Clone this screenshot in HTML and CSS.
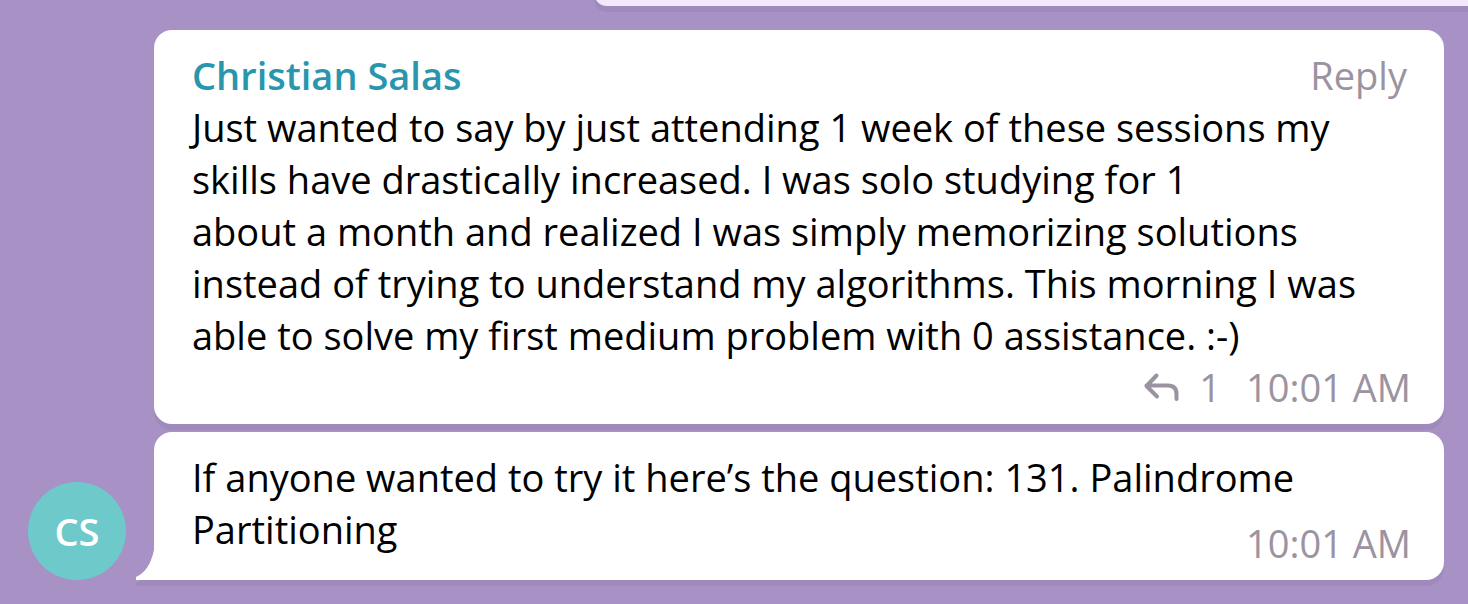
FILE: index.html
```html
<!DOCTYPE html>
<html lang="en">
<head>
<meta charset="utf-8">
<meta name="viewport" content="width=device-width, initial-scale=1">
<title>Group chat</title>
<link rel="stylesheet" href="styles.css">
</head>
<body>
<main class="chat">
  <div class="bubble outgoing"></div>
  <section class="group">
    <div class="avatar">CS</div>
    <div class="messages">
      <article class="bubble">
        <header class="head">
          <h2 class="author">Christian Salas</h2>
          <button class="reply" type="button">Reply</button>
        </header>
        <p class="text">Just wanted to say by just attending 1 week of these sessions my skills have drastically increased. I was solo studying for 1<br>about a month and realized I was simply memorizing solutions instead of trying to understand my algorithms. This morning I was able to solve my first medium problem with 0 assistance. :-)</p>
        <footer class="meta">
          <svg class="icon" viewBox="0 0 36 30" aria-hidden="true"><path d="M13.5 3.5 3.5 14l10.500 10.500M3.500 13.500H25q8.500 0 8.500 8.500v5"/></svg>
          <span class="count">1</span>
          <time>10:01 AM</time>
        </footer>
      </article>
      <article class="bubble last">
        <p class="text">If anyone wanted to try it here’s the question: 131. Palindrome Partitioning <time class="stamp">10:01 AM</time></p>
        <svg class="tail" viewBox="0 0 20 30" aria-hidden="true"><path d="M18 0C15 14 9 23 0 27V30H20V0Z"/></svg>
      </article>
    </div>
  </section>
</main>
</body>
</html>
```
FILE: styles.css
```css
* { box-sizing: border-box; }
body {
  margin: 0;
  min-height: 100vh;
  background: #a791c5;
  color: #000;
  font: 38px/52px "Open Sans", "Noto Sans", sans-serif;
  overflow: hidden;
}
.chat { display: flex; flex-direction: column; gap: 24px; }
.bubble {
  position: relative;
  background: #fff;
  border-radius: 18px;
  box-shadow: 0 6px 0 #9f8abb;
  padding: 19px 33px 11px 38px;
}
.outgoing {
  height: 26px;
  margin: -20px -30px 0 594px;
  padding: 0;
  background: #f1e9fb;
}
.group {
  display: flex;
  align-items: flex-end;
  gap: 28px;
  padding: 0 24px 24px 28px;
}
.avatar {
  flex: none;
  width: 98px;
  height: 98px;
  border-radius: 50%;
  background: #6ec9cb;
  color: #fff;
  font-weight: 600;
  line-height: 98px;
  text-align: center;
}
.messages { flex: 1; display: flex; flex-direction: column; gap: 8px; }
.head { display: flex; justify-content: space-between; }
.author { margin: 0; font-size: 38px; font-weight: 600; color: #2996ad; }
.reply {
  border: 0;
  padding: 0 4px 0 0;
  background: none;
  color: #9b939f;
  font: inherit;
}
.text { display: flow-root; margin: 0; }
.meta {
  display: flex;
  justify-content: flex-end;
  align-items: center;
  color: #9b939f;
}
.icon {
  width: 36px;
  height: 30px;
  margin-right: 20px;
  fill: none;
  stroke: currentColor;
  stroke-width: 4;
  stroke-linecap: round;
  stroke-linejoin: round;
}
.count { margin-right: 25px; }
.last { border-bottom-left-radius: 0; }
.stamp { float: right; margin-top: 14px; color: #9b939f; }
.tail {
  position: absolute;
  left: -18px;
  bottom: 0;
  width: 20px;
  height: 30px;
  overflow: visible;
  fill: #fff;
  filter: drop-shadow(0 6px 0 #9f8abb);
}
```
